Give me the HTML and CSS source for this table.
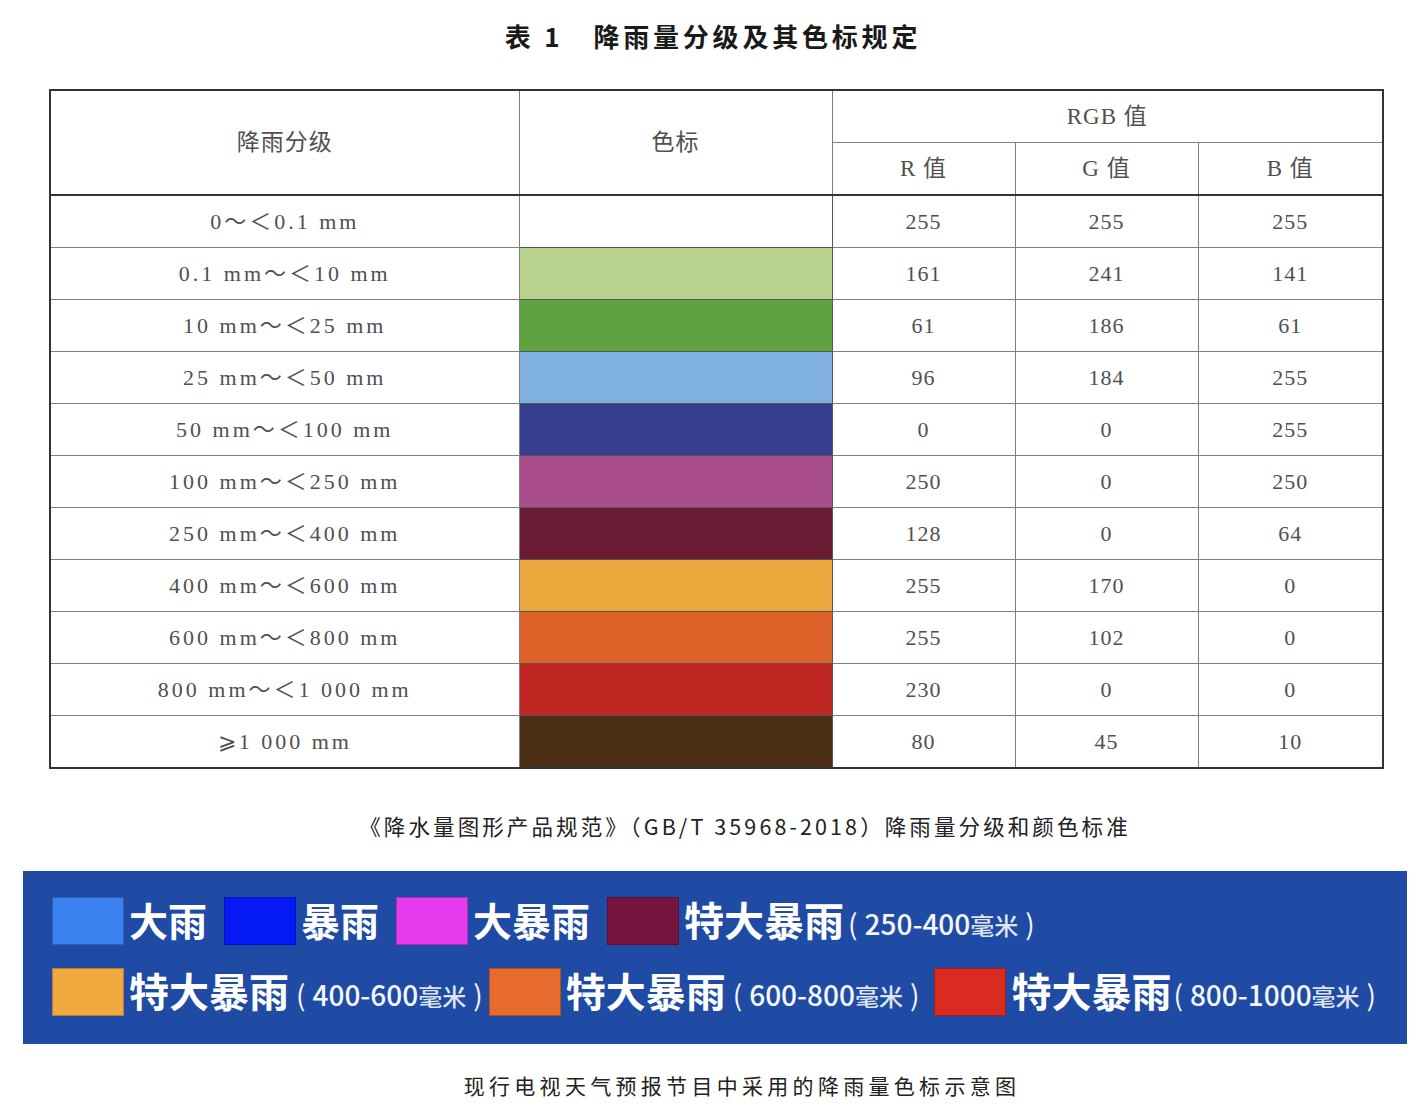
FILE: index.html
```html
<!DOCTYPE html>
<html lang="zh">
<head>
<meta charset="utf-8">
<title>降雨量分级及其色标规定</title>
<link rel="stylesheet" href="styles.css">
</head>
<body>
<div class="page">
  <h1 class="title"><span class="tno">表 1</span>降雨量分级及其色标规定</h1>
  <table class="grid">
    <colgroup>
      <col class="c1"><col class="c2"><col class="c3"><col class="c4"><col class="c5">
    </colgroup>
    <thead>
      <tr>
        <th rowspan="2">降雨分级</th>
        <th rowspan="2">色标</th>
        <th colspan="3">RGB 值</th>
      </tr>
      <tr class="sub">
        <th>R 值</th><th>G 值</th><th>B 值</th>
      </tr>
    </thead>
    <tbody>
      <tr><td class="lv">0～＜0.1 mm</td><td class="sw"></td><td>255</td><td>255</td><td>255</td></tr>
      <tr><td class="lv">0.1 mm～＜10 mm</td><td class="sw c-lg"></td><td>161</td><td>241</td><td>141</td></tr>
      <tr><td class="lv">10 mm～＜25 mm</td><td class="sw c-g"></td><td>61</td><td>186</td><td>61</td></tr>
      <tr><td class="lv">25 mm～＜50 mm</td><td class="sw c-lb"></td><td>96</td><td>184</td><td>255</td></tr>
      <tr><td class="lv">50 mm～＜100 mm</td><td class="sw c-nv"></td><td>0</td><td>0</td><td>255</td></tr>
      <tr><td class="lv">100 mm～＜250 mm</td><td class="sw c-mg"></td><td>250</td><td>0</td><td>250</td></tr>
      <tr><td class="lv">250 mm～＜400 mm</td><td class="sw c-mr"></td><td>128</td><td>0</td><td>64</td></tr>
      <tr><td class="lv">400 mm～＜600 mm</td><td class="sw c-yo"></td><td>255</td><td>170</td><td>0</td></tr>
      <tr><td class="lv">600 mm～＜800 mm</td><td class="sw c-or"></td><td>255</td><td>102</td><td>0</td></tr>
      <tr><td class="lv">800 mm～＜1 000 mm</td><td class="sw c-rd"></td><td>230</td><td>0</td><td>0</td></tr>
      <tr><td class="lv">⩾1 000 mm</td><td class="sw c-br"></td><td>80</td><td>45</td><td>10</td></tr>
    </tbody>
  </table>
  <p class="caption">《降水量图形产品规范》（GB/T 35968-2018）降雨量分级和颜色标准</p>
  <div class="banner">
    <div class="brow">
      <span class="bsw b-blue"></span><span class="blab">大雨</span>
      <span class="bsw b-dblue"></span><span class="blab">暴雨</span>
      <span class="bsw b-pink"></span><span class="blab">大暴雨</span>
      <span class="bsw b-maroon"></span><span class="blab tight">特大暴雨</span><span class="bnote n1"><span class="pl">(</span>250-400<small>毫米</small><span class="pr">)</span></span>
    </div>
    <div class="brow">
      <span class="bsw b-yellow"></span><span class="blab tight">特大暴雨</span><span class="bnote n2"><span class="pl">(</span>400-600<small>毫米</small><span class="pr">)</span></span>
      <span class="bsw b-orange"></span><span class="blab tight">特大暴雨</span><span class="bnote n3"><span class="pl">(</span>600-800<small>毫米</small><span class="pr">)</span></span>
      <span class="bsw b-red"></span><span class="blab tight">特大暴雨</span><span class="bnote n4"><span class="pl">(</span>800-1000<small>毫米</small><span class="pr">)</span></span>
    </div>
  </div>
  <p class="caption2">现行电视天气预报节目中采用的降雨量色标示意图</p>
</div>
</body>
</html>
```

FILE: styles.css
```css
html, body {
  margin: 0;
  padding: 0;
  background: #fff;
}

.page {
  width: 1426px;
}

.title {
  margin: 0;
  padding-top: 18px;
  height: 36px;
  line-height: 36px;
  text-align: center;
  font-family: "Noto Sans CJK SC", "Noto Sans", sans-serif;
  font-weight: 700;
  font-size: 26px;
  letter-spacing: 3.8px;
  color: #1a1a1a;
}

.tno {
  margin-right: 30px;
}

.grid {
  margin: 35px 0 0 49px;
  width: 1333px;
  border-collapse: collapse;
  table-layout: fixed;
  border: 2.5px solid #333;
  font-family: "Liberation Serif", "Noto Sans CJK SC", serif;
  font-size: 22px;
  color: #505050;
}

.c1 { width: 469px; }
.c2 { width: 313px; }
.c3 { width: 183px; }
.c4 { width: 183px; }
.c5 { width: 185px; }

.grid th,
.grid td {
  border: 1.5px solid #808080;
  text-align: center;
  vertical-align: middle;
  padding: 0;
  height: 51px;
  line-height: 22px;
  font-weight: 400;
  letter-spacing: 1px;
}

.grid td.lv {
  letter-spacing: 3px;
}

.grid thead th {
  font-size: 23px;
  line-height: 24px;
}

.grid thead tr.sub th {
  border-bottom: 2.5px solid #333;
}

.grid thead tr:first-child th[rowspan] {
  border-bottom: 2.5px solid #333;
}

.grid td.sw {
  border-color: #555;
}

.c-lg { background: #b8d18c; }
.c-g  { background: #5fa341; }
.c-lb { background: #80b1e0; }
.c-nv { background: #363f8f; }
.c-mg { background: #a94d8d; }
.c-mr { background: #6b1c35; }
.c-yo { background: #eba83c; }
.c-or { background: #dc6229; }
.c-rd { background: #c12722; }
.c-br { background: #4b3016; }

.caption {
  margin: 42px 0 0 0;
  padding-left: 64px;
  height: 30px;
  line-height: 30px;
  text-align: center;
  font-family: "Noto Sans CJK SC", "Noto Sans", sans-serif;
  font-size: 21.5px;
  color: #222;
  letter-spacing: 3.1px;
}

.banner {
  margin: 30px 0 0 23px;
  width: 1384px;
  height: 173px;
  box-sizing: border-box;
  background: #1f4ba5;
  padding: 26px 0 0 29px;
  font-family: "Noto Sans CJK SC", "Noto Sans", sans-serif;
  color: #fff;
}

.brow {
  display: flex;
  align-items: center;
  height: 48px;
}

.brow + .brow {
  margin-top: 23px;
}

.bsw {
  flex: none;
  width: 72px;
  height: 48px;
  box-sizing: border-box;
  border: 1px solid rgba(0, 0, 0, 0.25);
  margin-right: 5px;
}

.blab {
  flex: none;
  font-size: 39px;
  font-weight: 700;
  line-height: 48px;
  margin-right: 17px;
  margin-top: -4px;
}

.blab.tight {
  font-size: 40px;
  margin-right: 0;
}

.bnote {
  flex: none;
  display: flex;
  align-items: baseline;
  font-size: 28px;
  font-weight: 500;
  line-height: 48px;
  padding-top: 6px;
  color: #f4f6fb;
}

.bnote small {
  font-size: 24px;
  font-weight: 500;
  color: #dfe4f0;
}

.bnote .pl { margin-right: 7px; font-weight: 400; }
.bnote .pr { margin-left: 7px; font-weight: 400; }

.bnote.n1 { margin-left: 4px; }
.bnote.n2 { margin-left: 7px; margin-right: 6px; }
.bnote.n3 { margin-left: 7px; margin-right: 15px; }
.bnote.n4 { margin-left: 2px; }

.b-blue   { background: #3b82f0; }
.b-dblue  { background: #0519f5; }
.b-pink   { background: #e83bf0; }
.b-maroon { background: #76163e; }
.b-yellow { background: #f0a93e; }
.b-orange { background: #e86b2e; }
.b-red    { background: #d92b20; }

.caption2 {
  margin: 26px 0 0 0;
  padding-left: 58px;
  height: 30px;
  line-height: 30px;
  text-align: center;
  font-family: "Noto Sans CJK SC", "Noto Sans", sans-serif;
  font-size: 21px;
  letter-spacing: 4.3px;
  color: #222;
}
```
